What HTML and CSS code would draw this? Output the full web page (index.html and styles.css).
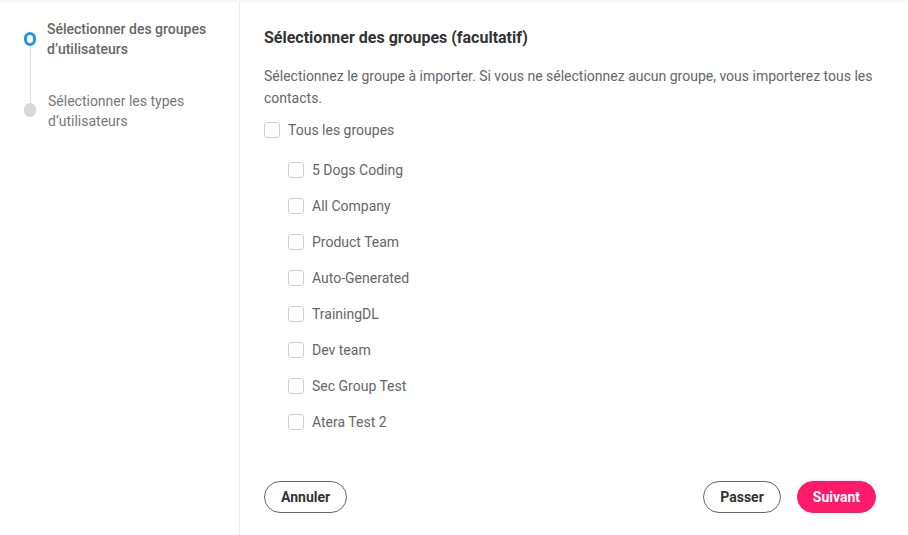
FILE: index.html
```html
<!DOCTYPE html>
<html lang="fr">
<head>
<meta charset="utf-8">
<link rel="stylesheet" href="styles.css">
</head>
<body>
<div class="frame">
  <aside class="steps">
    <div class="step active">
      <div class="marker"><span class="dot"></span><span class="line"></span></div>
      <div class="label">Sélectionner des groupes d’utilisateurs</div>
    </div>
    <div class="step">
      <div class="marker"><span class="dot"></span></div>
      <div class="label">Sélectionner les types d’utilisateurs</div>
    </div>
  </aside>
  <main class="content">
    <h1 class="title">Sélectionner des groupes (facultatif)</h1>
    <p class="desc">Sélectionnez le groupe à importer. Si vous ne sélectionnez aucun groupe, vous importerez tous les contacts.</p>
    <label class="check all"><span class="box"></span>Tous les groupes</label>
    <div class="groups">
      <label class="check"><span class="box"></span>5 Dogs Coding</label>
      <label class="check"><span class="box"></span>All Company</label>
      <label class="check"><span class="box"></span>Product Team</label>
      <label class="check"><span class="box"></span>Auto-Generated</label>
      <label class="check"><span class="box"></span>TrainingDL</label>
      <label class="check"><span class="box"></span>Dev team</label>
      <label class="check"><span class="box"></span>Sec Group Test</label>
      <label class="check"><span class="box"></span>Atera Test 2</label>
    </div>
    <div class="actions">
      <button class="btn outline">Annuler</button>
      <div class="right">
        <button class="btn outline">Passer</button>
        <button class="btn primary">Suivant</button>
      </div>
    </div>
  </main>
</div>
</body>
</html>
```

FILE: styles.css
```css
* { box-sizing: border-box; }
html, body { margin: 0; padding: 0; background: #f7f7f7; }
body {
  font-family: Roboto, "Liberation Sans", Arial, sans-serif;
  color: #666;
  font-size: 14px;
  width: 908px;
  height: 535px;
  overflow: hidden;
}
.frame {
  margin-top: 2px;
  height: 533px;
  background: #fff;
  border-top-left-radius: 4px;
  display: flex;
}
.steps {
  width: 240px;
  flex: none;
  border-right: 1px solid #ececec;
  padding: 17px 16px 0 24px;
}
.step {
  display: flex;
  gap: 11px;
}
.marker {
  width: 12px;
  flex: none;
  display: flex;
  flex-direction: column;
  align-items: center;
  padding-top: 13px;
}
.dot {
  width: 12px;
  height: 14px;
  border-radius: 6px;
  background: #d8d8d8;
  flex: none;
}
.step.active .dot {
  background: #fff;
  border: 3px solid #2196f3;
}
.line {
  width: 1px;
  height: 57px;
  background: #dcdcdc;
}
.label {
  line-height: 20px;
  color: #777;
  width: 170px;
}
.step.active .label {
  font-weight: 500;
  color: #666;
}
.step + .step { margin-top: -2px; }
.step + .step .marker { padding-top: 2px; }
.step + .step .label { margin-left: 1px; margin-top: -10px; }

.content {
  flex: 1;
  padding: 26px 32px 0 24px;
  display: flex;
  flex-direction: column;
}
.title {
  margin: 0;
  font-size: 16px;
  font-weight: 700;
  color: #333;
  line-height: 20px;
}
.desc {
  margin: 17px 0 0;
  line-height: 22px;
  color: #666;
}
.check {
  display: flex;
  align-items: center;
  gap: 8px;
  height: 20px;
  color: #666;
}
.box {
  width: 16px;
  height: 16px;
  border: 1px solid #cfcfcf;
  border-radius: 3px;
  background: #fff;
  flex: none;
}
.check.all { margin-top: 11px; }
.groups {
  padding-left: 24px;
  margin-top: 20px;
  display: flex;
  flex-direction: column;
  gap: 16px;
}
.actions {
  margin-top: 49px;
  display: flex;
  justify-content: space-between;
  align-items: center;
}
.right { display: flex; gap: 16px; }
.btn {
  font-family: inherit;
  font-size: 14px;
  font-weight: 700;
  height: 32px;
  border-radius: 16px;
  padding: 0 16px;
  cursor: pointer;
}
.btn.outline {
  background: #fff;
  border: 1px solid #666;
  color: #333;
}
.btn.primary {
  background: #ff1a6a;
  border: 1px solid #ff1a6a;
  color: #fff;
  padding: 0 15px;
}
```
